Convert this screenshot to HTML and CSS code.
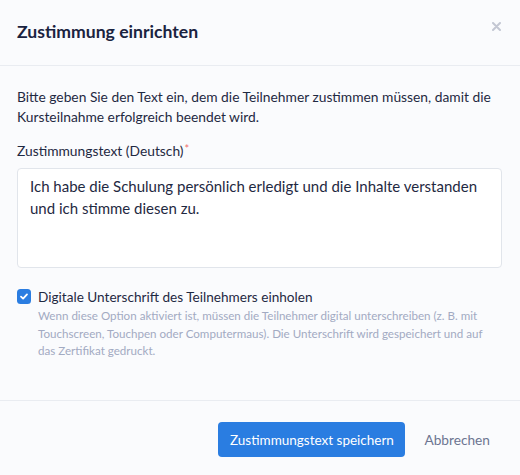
FILE: index.html
```html
<!DOCTYPE html>
<html lang="de">
<head>
<meta charset="utf-8">
<link rel="stylesheet" href="styles.css">
</head>
<body>
<div class="modal">
  <header class="modal-header">
    <h1 class="modal-title">Zustimmung einrichten</h1>
    <button class="close" aria-label="Schließen">
      <svg width="9" height="9" viewBox="0 0 9 9"><path d="M1 1 L8 8 M8 1 L1 8" stroke="#c3c7d3" stroke-width="2" stroke-linecap="round"/></svg>
    </button>
  </header>
  <section class="modal-body">
    <p class="intro">Bitte geben Sie den Text ein, dem die Teilnehmer zustimmen müssen, damit die Kursteilnahme erfolgreich beendet wird.</p>
    <label class="field-label">Zustimmungstext (Deutsch)<span class="req">*</span></label>
    <div class="textarea">Ich habe die Schulung persönlich erledigt und die Inhalte verstanden und ich stimme diesen zu.</div>
    <div class="check-row">
      <span class="checkbox">
        <svg width="14" height="15" viewBox="0 0 14 15"><path d="M4 7.6 L6.1 9.6 L10 5.4" fill="none" stroke="#fff" stroke-width="1.8" stroke-linecap="round" stroke-linejoin="round"/></svg>
      </span>
      <div class="check-text">
        <div class="check-label">Digitale Unterschrift des Teilnehmers einholen</div>
        <div class="check-help">Wenn diese Option aktiviert ist, müssen die Teilnehmer digital unterschreiben (z. B. mit Touchscreen, Touchpen oder Computermaus). Die Unterschrift wird gespeichert und auf das Zertifikat gedruckt.</div>
      </div>
    </div>
  </section>
  <footer class="modal-footer">
    <button class="btn-primary">Zustimmungstext speichern</button>
    <button class="btn-link">Abbrechen</button>
  </footer>
</div>
</body>
</html>
```
FILE: styles.css
```css
* { box-sizing: border-box; }
html, body { margin: 0; padding: 0; }
body {
  background: #fafbfd;
  font-family: "Lato", "Noto Sans", sans-serif;
  color: #1f2942;
  width: 520px;
  height: 475px;
  overflow: hidden;
}
.modal { display: flex; flex-direction: column; height: 475px; }
.modal-header {
  height: 66px;
  border-bottom: 1px solid #e9ecf1;
  display: flex;
  align-items: center;
  justify-content: space-between;
  padding: 0 17px 2px 17px;
}
.modal-title {
  margin: 0;
  font-size: 17.6px;
  font-weight: 700;
  color: #1a2340;
}
.close {
  border: 0;
  background: none;
  padding: 0;
  margin-top: -10px;
  margin-right: 2px;
  display: flex;
}
.modal-body {
  padding: 21px 18px 0 17px;
  flex: 1;
}
.intro {
  margin: 0 0 15px;
  font-size: 13.8px;
  line-height: 19.5px;
}
.field-label {
  display: block;
  font-size: 13.8px;
  line-height: 20px;
  margin-bottom: 7px;
}
.req { color: #f07070; font-size: 11px; vertical-align: top; position: relative; top: -2px; margin-left: 1px; }
.textarea {
  height: 100px;
  background: #fff;
  border: 1px solid #e1e5eb;
  border-radius: 4px;
  padding: 6px 12px;
  font-size: 15px;
  line-height: 22px;
}
.check-row {
  display: flex;
  gap: 7px;
  margin-top: 19px;
}
.checkbox {
  flex: none;
  width: 14px;
  height: 15px;
  margin-top: 2px;
  border-radius: 3.5px;
  background: #2a7de1;
  display: flex;
}
.check-label { font-size: 13.6px; line-height: 20px; }
.check-help {
  font-size: 11.6px;
  line-height: 17.5px;
  color: #a2aac2;
}
.modal-footer {
  border-top: 1px solid #e9ecf1;
  height: 75px;
  display: flex;
  align-items: flex-start;
  justify-content: flex-end;
  padding: 21px 30px 0 0;
  gap: 19px;
}
.btn-primary {
  height: 35px;
  width: 187px;
  background: #2a7de1;
  color: #fff;
  border: 0;
  border-radius: 4px;
  font-family: inherit;
  font-size: 13.5px;
  padding: 0;
}
.btn-link {
  height: 35px;
  border: 0;
  background: none;
  color: #6c7591;
  font-family: inherit;
  font-size: 13.7px;
  padding: 0;
}
```
